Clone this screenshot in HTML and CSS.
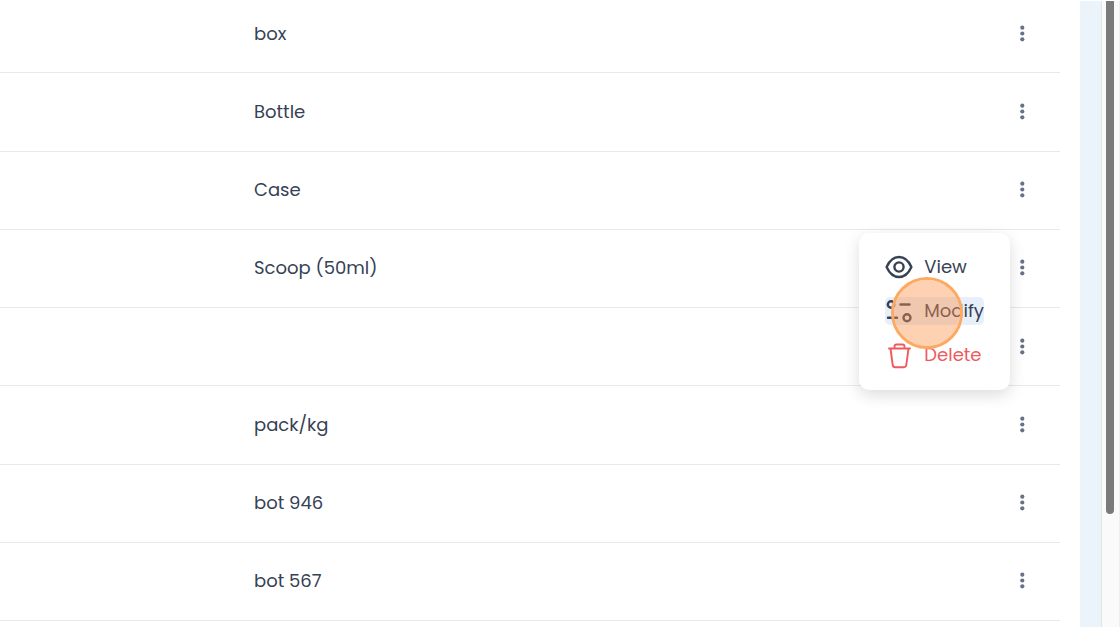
FILE: index.html
```html
<!DOCTYPE html>
<html lang="en">
<head>
<meta charset="utf-8">
<meta name="viewport" content="width=device-width, initial-scale=1">
<title>Units</title>
<link rel="stylesheet" href="styles.css">
</head>
<body>
<svg class="sprite" aria-hidden="true">
  <symbol id="dots" viewBox="0 0 6 18"><circle cx="3.300" cy="2.700" r="2.100"/><circle cx="3.300" cy="8.500" r="2.100"/><circle cx="3.300" cy="14.300" r="2.100"/></symbol>
</svg>
<div class="page">
  <main class="panel">
    <table class="units">
      <tbody>
        <tr><td class="name">box</td><td class="actions"><button class="more" aria-label="Actions for box"><svg><use href="#dots"/></svg></button></td></tr>
        <tr><td class="name">Bottle</td><td class="actions"><button class="more" aria-label="Actions for Bottle"><svg><use href="#dots"/></svg></button></td></tr>
        <tr><td class="name">Case</td><td class="actions"><button class="more" aria-label="Actions for Case"><svg><use href="#dots"/></svg></button></td></tr>
        <tr>
          <td class="name">Scoop (50ml)</td>
          <td class="actions">
            <button class="more" aria-label="Actions for Scoop"><svg><use href="#dots"/></svg></button>
            <div class="menu">
              <button class="item">
                <svg class="icon" viewBox="0 0 28 28"><path d="M1.600 14C4.500 7.500 9 4 14 4S23.500 7.500 26.400 14C23.500 20.500 19 24 14 24S4.500 20.500 1.600 14Z"/><circle cx="14" cy="14" r="4.600"/></svg>
                <span>View</span>
              </button>
              <button class="item active">
                <svg class="icon" viewBox="0 0 28 28"><circle cx="6" cy="7.500" r="3.200"/><path d="M15.500 7.500h9M3 20.800h9"/><circle cx="22" cy="20.800" r="3.500"/></svg>
                <span>Modify</span>
              </button>
              <button class="item danger">
                <svg class="icon thin" viewBox="0 0 28 28"><path d="M4 7.500h21M9.500 7.500V5.500a2 2 0 0 1 2-2h6a2 2 0 0 1 2 2v2M5.500 7.500l2.200 16.500a2.500 2.500 0 0 0 2.500 2.200h8.600a2.500 2.500 0 0 0 2.500-2.200L23.500 7.500"/></svg>
                <span>Delete</span>
              </button>
              <span class="pointer"></span>
            </div>
          </td>
        </tr>
        <tr><td class="name"></td><td class="actions"><button class="more" aria-label="Actions"><svg><use href="#dots"/></svg></button></td></tr>
        <tr><td class="name">pack/kg</td><td class="actions"><button class="more" aria-label="Actions for pack/kg"><svg><use href="#dots"/></svg></button></td></tr>
        <tr><td class="name">bot 946</td><td class="actions"><button class="more" aria-label="Actions for bot 946"><svg><use href="#dots"/></svg></button></td></tr>
        <tr><td class="name">bot 567</td><td class="actions"><button class="more" aria-label="Actions for bot 567"><svg><use href="#dots"/></svg></button></td></tr>
      </tbody>
    </table>
  </main>
  <div class="scrollbar"><div class="thumb"></div></div>
</div>
</body>
</html>
```
FILE: styles.css
```css
* { box-sizing: border-box; }

body {
  margin: 0;
  background: #fff;
  color: #364154;
  font: 18px/28px Poppins, Inter, sans-serif;
}

.sprite { position: absolute; width: 0; height: 0; }

.page {
  display: grid;
  grid-template-columns: 1fr 19px;
  height: 100vh;
  padding: 1px 0;
  overflow: hidden;
}

.panel {
  min-width: 0;
  min-height: 0;
  padding-right: 20px;
  border-right: 21px solid #ebf4fb;
}

.units {
  width: 100%;
  height: calc(100vh - 2px);
  margin-top: -6px;
  border-collapse: separate;
  border-spacing: 0;
}

.units td {
  padding: 0;
  border-bottom: 1px solid #e6eaee;
  vertical-align: middle;
}

.units .name { padding-left: 254px; }

.units .actions {
  position: relative;
  width: 76px;
}

button {
  border: 0;
  background: none;
  color: inherit;
  font: inherit;
  cursor: pointer;
}

.more {
  display: grid;
  place-items: center;
  width: 28px;
  height: 28px;
  margin-left: 24px;
  padding: 0;
}

.more svg {
  width: 6px;
  height: 18px;
  fill: #687286;
}

.menu {
  position: absolute;
  top: 3px;
  right: 50px;
  z-index: 1;
  display: grid;
  gap: 16px;
  padding: 20px 26px 21px;
  border-radius: 10px;
  background: #fff;
  box-shadow: 0 5px 16px rgba(0, 0, 0, 0.14);
}

.item {
  display: flex;
  align-items: center;
  gap: 11px;
  padding: 0;
  border-radius: 5px;
  text-align: left;
}

.item.active { background: #e7f0fa; }
.item.danger { color: #ee5a5d; }

.icon {
  width: 28px;
  height: 28px;
  fill: none;
  stroke: currentColor;
  stroke-width: 2.4;
  stroke-linecap: round;
  stroke-linejoin: round;
}

.icon.thin { stroke-width: 1.9; }

.pointer {
  position: absolute;
  top: 44px;
  left: 32px;
  width: 72px;
  height: 72px;
  border: 3px solid #fea961;
  border-radius: 50%;
  background: rgba(251, 146, 72, 0.42);
  background-clip: padding-box;
  pointer-events: none;
}

.scrollbar {
  padding: 0 5px 0 4px;
  border-left: 1px solid #e4e4e4;
  border-right: 1px solid #eee;
  background: #fafafa;
}

.thumb {
  height: 82%;
  border-radius: 0 0 5px 5px;
  background: #7a7a7a;
}
```
